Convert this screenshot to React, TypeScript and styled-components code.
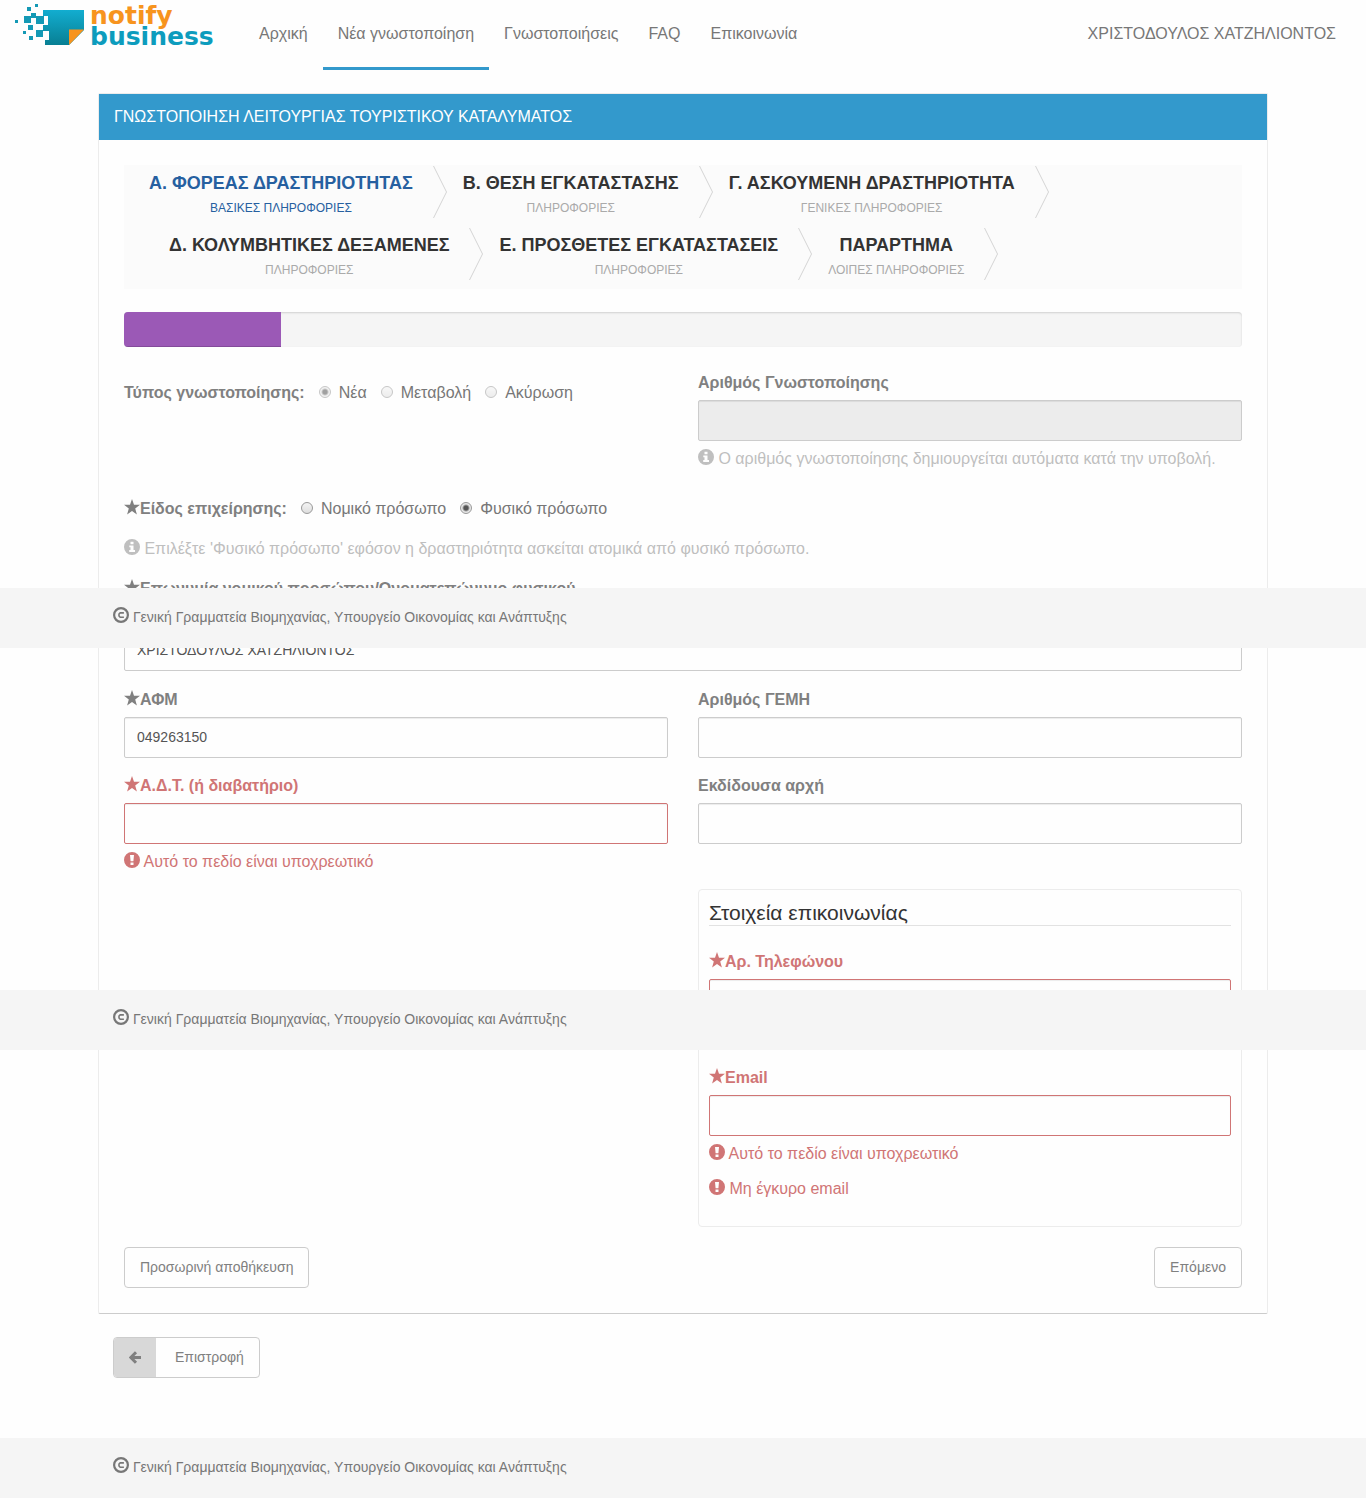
import React from "react";
import styled, { createGlobalStyle, css } from "styled-components";

const color = {
  page: "#fefefe",
  primary: "#3399cc",
  text: "#777",
  label: "#808080",
  muted: "#bfbfbf",
  border: "#ccc",
  soft: "#ececec",
  error: "#d07575",
  bar: "#f5f5f5",
};

const GlobalStyle = createGlobalStyle`
  *, *::before, *::after { box-sizing: border-box; }
  body {
    margin: 0;
    background: ${color.page};
    color: ${color.text};
    font-family: "Liberation Sans", Arial, sans-serif;
    font-size: 16px;
    line-height: 24px;
  }
  input, button { font-family: inherit; }
`;

const Page = styled.div`
  position: relative;
`;

const Header = styled.header`
  display: flex;
  height: 70px;
  padding: 0 15px;
`;

const Brand = styled.a`
  display: block;
  width: 214px;
  margin-right: 15px;
`;

const Nav = styled.nav`
  display: flex;
  flex: 1;
`;

const NavLink = styled.a<{ $active?: boolean; $end?: boolean }>`
  padding: 22px 15px 21px;
  border-bottom: 3px solid ${(p) => (p.$active ? color.primary : "transparent")};
  color: ${color.text};
  text-decoration: none;
  white-space: nowrap;
  ${(p) => p.$end && css`margin-left: auto;`}
`;

const Container = styled.div`
  max-width: 1170px;
  margin: 0 auto;
`;

const Panel = styled.section`
  margin-top: 23px;
  border: 1px solid ${color.soft};
  border-bottom-color: ${color.border};
  border-radius: 2px;
`;

const PanelTitle = styled.h1`
  margin: 0;
  padding: 11px 15px;
  background: ${color.primary};
  color: #fff;
  font-size: 16px;
  font-weight: 400;
`;

const PanelBody = styled.form`
  padding: 25px;
`;

const Steps = styled.ol`
  display: flex;
  flex-wrap: wrap;
  margin: 0 0 23px;
  padding: 0 0 0 9px;
  list-style: none;
  background: #fbfbfb;
`;

const Step = styled.li<{ $active?: boolean; $indent?: boolean }>`
  display: flex;
  height: 62px;
  padding-left: ${(p) => (p.$indent ? 36 : 16)}px;
  color: ${(p) => (p.$active ? "#2660a0" : "#333")};
`;

const StepText = styled.div`
  padding: 6px 20px 0 0;
  text-align: center;
`;

const StepTitle = styled.div`
  font-size: 18px;
  font-weight: 700;
  white-space: nowrap;
`;

const StepNote = styled.div<{ $active?: boolean }>`
  margin-top: 4px;
  color: ${(p) => (p.$active ? "#2660a0" : "#aaa")};
  font-size: 12px;
  line-height: 18px;
`;

const Progress = styled.div`
  height: 35px;
  margin-bottom: 23px;
  overflow: hidden;
  background: ${color.bar};
  border-radius: 4px;
  box-shadow: inset 0 1px 2px rgba(0, 0, 0, 0.15);
`;

const ProgressFill = styled.div`
  height: 100%;
  background: #9b59b6;
  box-shadow: inset 0 -1px 0 rgba(0, 0, 0, 0.15);
`;

const Row = styled.div`
  display: grid;
  grid-template-columns: 1fr 1fr;
  column-gap: 30px;
  margin-bottom: 15px;
`;

const Block = styled.div<{ $tight?: boolean }>`
  margin-bottom: ${(p) => (p.$tight ? 15 : 16)}px;
`;

const Label = styled.label<{ $error?: boolean }>`
  display: block;
  padding: 1px 0 5px;
  color: ${(p) => (p.$error ? color.error : color.label)};
  font-weight: 700;
`;

const Input = styled.input<{ $error?: boolean }>`
  display: block;
  width: 100%;
  height: 41px;
  padding: 0 12px 2px;
  background: ${color.page};
  border: 1px solid ${(p) => (p.$error ? color.error : color.border)};
  border-radius: 2px;
  box-shadow: inset 0 1px 1px rgba(0, 0, 0, 0.075);
  color: #555;
  font-size: 14px;
  &:disabled { background: #ececec; }
`;

const Message = styled.p<{ $error?: boolean; $spaced?: boolean }>`
  margin: ${(p) => (p.$spaced ? 11 : 6)}px 0 0;
  color: ${(p) => (p.$error ? color.error : color.muted)};
`;

const Hint = styled(Message)`
  margin: 0 0 15px;
`;

const Choices = styled.fieldset`
  display: flex;
  align-items: center;
  gap: 14px;
  margin: 0;
  padding: 11px 0 0;
  border: 0;
  align-self: start;
`;

const ChoicesTitle = styled.span`
  color: ${color.label};
  font-weight: 700;
`;

const Choice = styled.label`
  display: flex;
  align-items: center;
  gap: 8px;
`;

const Radio = styled.input`
  appearance: none;
  width: 12px;
  height: 12px;
  margin: 0 0 2px;
  border: 1px solid #999;
  border-radius: 50%;
  background: linear-gradient(#f4f4f4, #dedede);
  &:checked { background: radial-gradient(circle, #555 0 2px, #e8e8e8 4px); }
  &:disabled { opacity: 0.55; }
`;

const Contact = styled.section`
  grid-column: 2;
  padding: 11px 10px 25px;
  border: 1px solid ${color.soft};
  border-radius: 4px;
`;

const ContactTitle = styled.h2`
  margin: 0 0 23px;
  border-bottom: 1px solid #e2e2e2;
  color: #333;
  font-size: 21px;
  font-weight: 400;
`;

const Actions = styled.div`
  display: flex;
  justify-content: space-between;
  padding-top: 5px;
`;

const Button = styled.button`
  display: flex;
  align-items: center;
  height: 41px;
  padding: 0 15px;
  overflow: hidden;
  background: ${color.page};
  border: 1px solid ${color.border};
  border-radius: 4px;
  color: ${color.label};
  font-size: 14px;
`;

const ButtonText = styled.span`
  padding-bottom: 2px;
`;

const BackArea = styled.div`
  padding: 23px 15px 60px;
`;

const BackButton = styled(Button)`
  gap: 19px;
  padding-left: 0;
`;

const BackIcon = styled.span`
  display: flex;
  align-items: center;
  justify-content: center;
  width: 42px;
  height: 100%;
  background: #d8d8d8;
`;

const FooterBar = styled.footer<{ $top?: number }>`
  height: 60px;
  background: ${color.bar};
  ${(p) =>
    p.$top !== undefined &&
    css`
      position: absolute;
      top: ${p.$top}px;
      left: 0;
      right: 0;
    `}
`;

const FooterText = styled.div`
  padding: 17px 15px 0;
  font-size: 14px;
`;

const Glyph = styled.svg`
  display: inline-block;
  width: 16px;
  height: 16px;
  vertical-align: -1px;
  fill: currentColor;
`;

const LogoWord = styled.text`
  font-family: "DejaVu Sans", sans-serif;
  font-size: 25px;
  font-weight: 700;
`;

const Star = () => (
  <Glyph viewBox="0 0 16 16" aria-hidden="true">
    <path d="M8 0l2 5.7 6 .1-4.8 3.7 1.7 6L8 12l-4.9 3.5 1.7-6L0 5.800l6-.1z" />
  </Glyph>
);

const Info = () => (
  <Glyph viewBox="0 0 16 16" aria-hidden="true">
    <path
      fillRule="evenodd"
      d="M8 0a8 8 0 100 16A8 8 0 008 0zM6.500 2.800h3v2.500h-3zM5.300 6.500h4.200V11H11v2H5.200v-2h1.300V8.300H5.300z"
    />
  </Glyph>
);

const Alert = () => (
  <Glyph viewBox="0 0 16 16" aria-hidden="true">
    <path
      fillRule="evenodd"
      d="M8 0a8 8 0 100 16A8 8 0 008 0zM6 3h4l-.6 6.200H6.600zM6.500 10.400h3v2.600h-3z"
    />
  </Glyph>
);

const Copyright = () => (
  <Glyph viewBox="0 0 16 16" aria-hidden="true">
    <circle cx="8" cy="8" r="6.900" fill="none" stroke="currentColor" strokeWidth="2.200" />
    <path
      d="M10.900 5.900H7.200L6 7v2l1.200 1.200h3.700"
      fill="none"
      stroke="currentColor"
      strokeWidth="1.600"
    />
  </Glyph>
);

const ArrowLeft = () => (
  <svg width="12" height="14" viewBox="0 0 12 14" aria-hidden="true">
    <path
      d="M7 1.200L1.800 6.500 7 11.800M2.500 6.500H12"
      fill="none"
      stroke="currentColor"
      strokeWidth="3"
    />
  </svg>
);

const pixels = [
  [15, 20, 3], [27, 7, 4], [35, 4, 3], [31, 13, 5], [24, 16, 7],
  [36, 16, 8], [28, 25, 5], [23, 31, 3], [36, 30, 7], [29, 36, 4],
];

const Logo = () => (
  <svg width="215" height="60" viewBox="15 0 215 60" role="img" aria-label="notify business">
    <defs>
      <linearGradient id="sheet" x1="0" y1="0" x2="0" y2="1">
        <stop offset="0" stopColor="#12add0" />
        <stop offset="1" stopColor="#087f93" />
      </linearGradient>
    </defs>
    <path
      d="M43 10h41v20L69 45H45v-5h4v-9h-6v-6h5v-9h-5z"
      fill="url(#sheet)"
    />
    <path d="M69 29.500h15L69 45z" fill="#f7941e" />
    {pixels.map(([x, y, size]) => (
      <rect key={`${x}-${y}`} x={x} y={y} width={size} height={size} fill="#1499b5" />
    ))}
    <LogoWord x="90" y="24" fill="#f7941e">notify</LogoWord>
    <LogoWord x="90" y="45" fill="#0d9cbd">business</LogoWord>
  </svg>
);

const steps = [
  { title: "Α. ΦΟΡΕΑΣ ΔΡΑΣΤΗΡΙΟΤΗΤΑΣ", note: "ΒΑΣΙΚΕΣ ΠΛΗΡΟΦΟΡΙΕΣ", active: true },
  { title: "Β. ΘΕΣΗ ΕΓΚΑΤΑΣΤΑΣΗΣ", note: "ΠΛΗΡΟΦΟΡΙΕΣ" },
  { title: "Γ. ΑΣΚΟΥΜΕΝΗ ΔΡΑΣΤΗΡΙΟΤΗΤΑ", note: "ΓΕΝΙΚΕΣ ΠΛΗΡΟΦΟΡΙΕΣ" },
  { title: "Δ. ΚΟΛΥΜΒΗΤΙΚΕΣ ΔΕΞΑΜΕΝΕΣ", note: "ΠΛΗΡΟΦΟΡΙΕΣ", indent: true },
  { title: "Ε. ΠΡΟΣΘΕΤΕΣ ΕΓΚΑΤΑΣΤΑΣΕΙΣ", note: "ΠΛΗΡΟΦΟΡΙΕΣ" },
  { title: "ΠΑΡΑΡΤΗΜΑ", note: "ΛΟΙΠΕΣ ΠΛΗΡΟΦΟΡΙΕΣ" },
];

const Chevron = () => (
  <svg width="14" height="54" viewBox="0 0 14 54" aria-hidden="true">
    <path d="M0.500 1L13.500 27L0.500 53" fill="none" stroke="#d4d4d4" />
  </svg>
);

type FieldProps = {
  id: string;
  label: React.ReactNode;
  required?: boolean;
  value?: string;
  disabled?: boolean;
  hint?: string;
  type?: string;
  errors?: string[];
};

function Field({ id, label, required, value, disabled, hint, type = "text", errors = [] }: FieldProps) {
  const invalid = errors.length > 0;
  return (
    <div>
      <Label htmlFor={id} $error={invalid}>
        {required && <Star />}
        {label}
      </Label>
      <Input id={id} type={type} defaultValue={value} disabled={disabled} $error={invalid} />
      {hint && (
        <Message>
          <Info /> {hint}
        </Message>
      )}
      {errors.map((text, i) => (
        <Message key={text} $error $spaced={i > 0}>
          <Alert /> {text}
        </Message>
      ))}
    </div>
  );
}

type RadioGroupProps = {
  name: string;
  title: string;
  options: string[];
  selected: string;
  required?: boolean;
  disabled?: boolean;
};

function RadioGroup({ name, title, options, selected, required, disabled }: RadioGroupProps) {
  return (
    <Choices aria-label={title}>
      <ChoicesTitle>
        {required && <Star />}
        {title}
      </ChoicesTitle>
      {options.map((option) => (
        <Choice key={option}>
          <Radio type="radio" name={name} defaultChecked={option === selected} disabled={disabled} />
          {option}
        </Choice>
      ))}
    </Choices>
  );
}

function Footer({ top }: { top?: number }) {
  return (
    <FooterBar $top={top}>
      <Container>
        <FooterText>
          <Copyright /> Γενική Γραμματεία Βιομηχανίας, Υπουργείο Οικονομίας και Ανάπτυξης
        </FooterText>
      </Container>
    </FooterBar>
  );
}

const REQUIRED = "Αυτό το πεδίο είναι υποχρεωτικό";
const progress = 14;

export default function App() {
  return (
    <Page>
      <GlobalStyle />
      <Header>
        <Brand href="#">
          <Logo />
        </Brand>
        <Nav>
          <NavLink href="#">Αρχική</NavLink>
          <NavLink href="#" $active>Νέα γνωστοποίηση</NavLink>
          <NavLink href="#">Γνωστοποιήσεις</NavLink>
          <NavLink href="#">FAQ</NavLink>
          <NavLink href="#">Επικοινωνία</NavLink>
          <NavLink href="#" $end>ΧΡΙΣΤΟΔΟΥΛΟΣ ΧΑΤΖΗΛΙΟΝΤΟΣ</NavLink>
        </Nav>
      </Header>

      <Container as="main">
        <Panel>
          <PanelTitle>ΓΝΩΣΤΟΠΟΙΗΣΗ ΛΕΙΤΟΥΡΓΙΑΣ ΤΟΥΡΙΣΤΙΚΟΥ ΚΑΤΑΛΥΜΑΤΟΣ</PanelTitle>
          <PanelBody noValidate>
            <Steps>
              {steps.map((step) => (
                <Step key={step.title} $active={step.active} $indent={step.indent}>
                  <StepText>
                    <StepTitle>{step.title}</StepTitle>
                    <StepNote $active={step.active}>{step.note}</StepNote>
                  </StepText>
                  <Chevron />
                </Step>
              ))}
            </Steps>

            <Progress role="progressbar" aria-valuenow={progress} aria-valuemin={0} aria-valuemax={100}>
              <ProgressFill style={{ width: `${progress}%` }} />
            </Progress>

            <Row>
              <RadioGroup
                name="kind"
                title="Τύπος γνωστοποίησης:"
                options={["Νέα", "Μεταβολή", "Ακύρωση"]}
                selected="Νέα"
                disabled
              />
              <Field
                id="number"
                label="Αριθμός Γνωστοποίησης"
                hint="Ο αριθμός γνωστοποίησης δημιουργείται αυτόματα κατά την υποβολή."
                disabled
              />
            </Row>

            <Block>
              <RadioGroup
                name="entity"
                title="Είδος επιχείρησης:"
                options={["Νομικό πρόσωπο", "Φυσικό πρόσωπο"]}
                selected="Φυσικό πρόσωπο"
                required
              />
            </Block>
            <Hint>
              <Info /> Επιλέξτε 'Φυσικό πρόσωπο' εφόσον η δραστηριότητα ασκείται ατομικά από φυσικό πρόσωπο.
            </Hint>

            <Block>
              <Field
                id="name"
                label={<>Επωνυμία νομικού προσώπου/Ονοματεπώνυμο φυσικού<br />προσώπου</>}
                value="ΧΡΙΣΤΟΔΟΥΛΟΣ ΧΑΤΖΗΛΙΟΝΤΟΣ"
                required
              />
            </Block>

            <Row>
              <Field id="afm" label="ΑΦΜ" value="049263150" required />
              <Field id="gemi" label="Αριθμός ΓΕΜΗ" />
            </Row>
            <Row>
              <Field id="adt" label="Α.Δ.Τ. (ή διαβατήριο)" errors={[REQUIRED]} required />
              <Field id="authority" label="Εκδίδουσα αρχή" />
            </Row>

            <Row>
              <Contact>
                <ContactTitle>Στοιχεία επικοινωνίας</ContactTitle>
                <Block $tight>
                  <Field id="phone" type="tel" label="Αρ. Τηλεφώνου" errors={[REQUIRED]} required />
                </Block>
                <Field id="email" type="email" label="Email" errors={[REQUIRED, "Μη έγκυρο email"]} required />
              </Contact>
            </Row>

            <Actions>
              <Button type="button">
                <ButtonText>Προσωρινή αποθήκευση</ButtonText>
              </Button>
              <Button type="button">
                <ButtonText>Επόμενο</ButtonText>
              </Button>
            </Actions>
          </PanelBody>
        </Panel>

        <BackArea>
          <BackButton type="button">
            <BackIcon>
              <ArrowLeft />
            </BackIcon>
            <ButtonText>Επιστροφή</ButtonText>
          </BackButton>
        </BackArea>
      </Container>

      <Footer />
      <Footer top={588} />
      <Footer top={990} />
    </Page>
  );
}
